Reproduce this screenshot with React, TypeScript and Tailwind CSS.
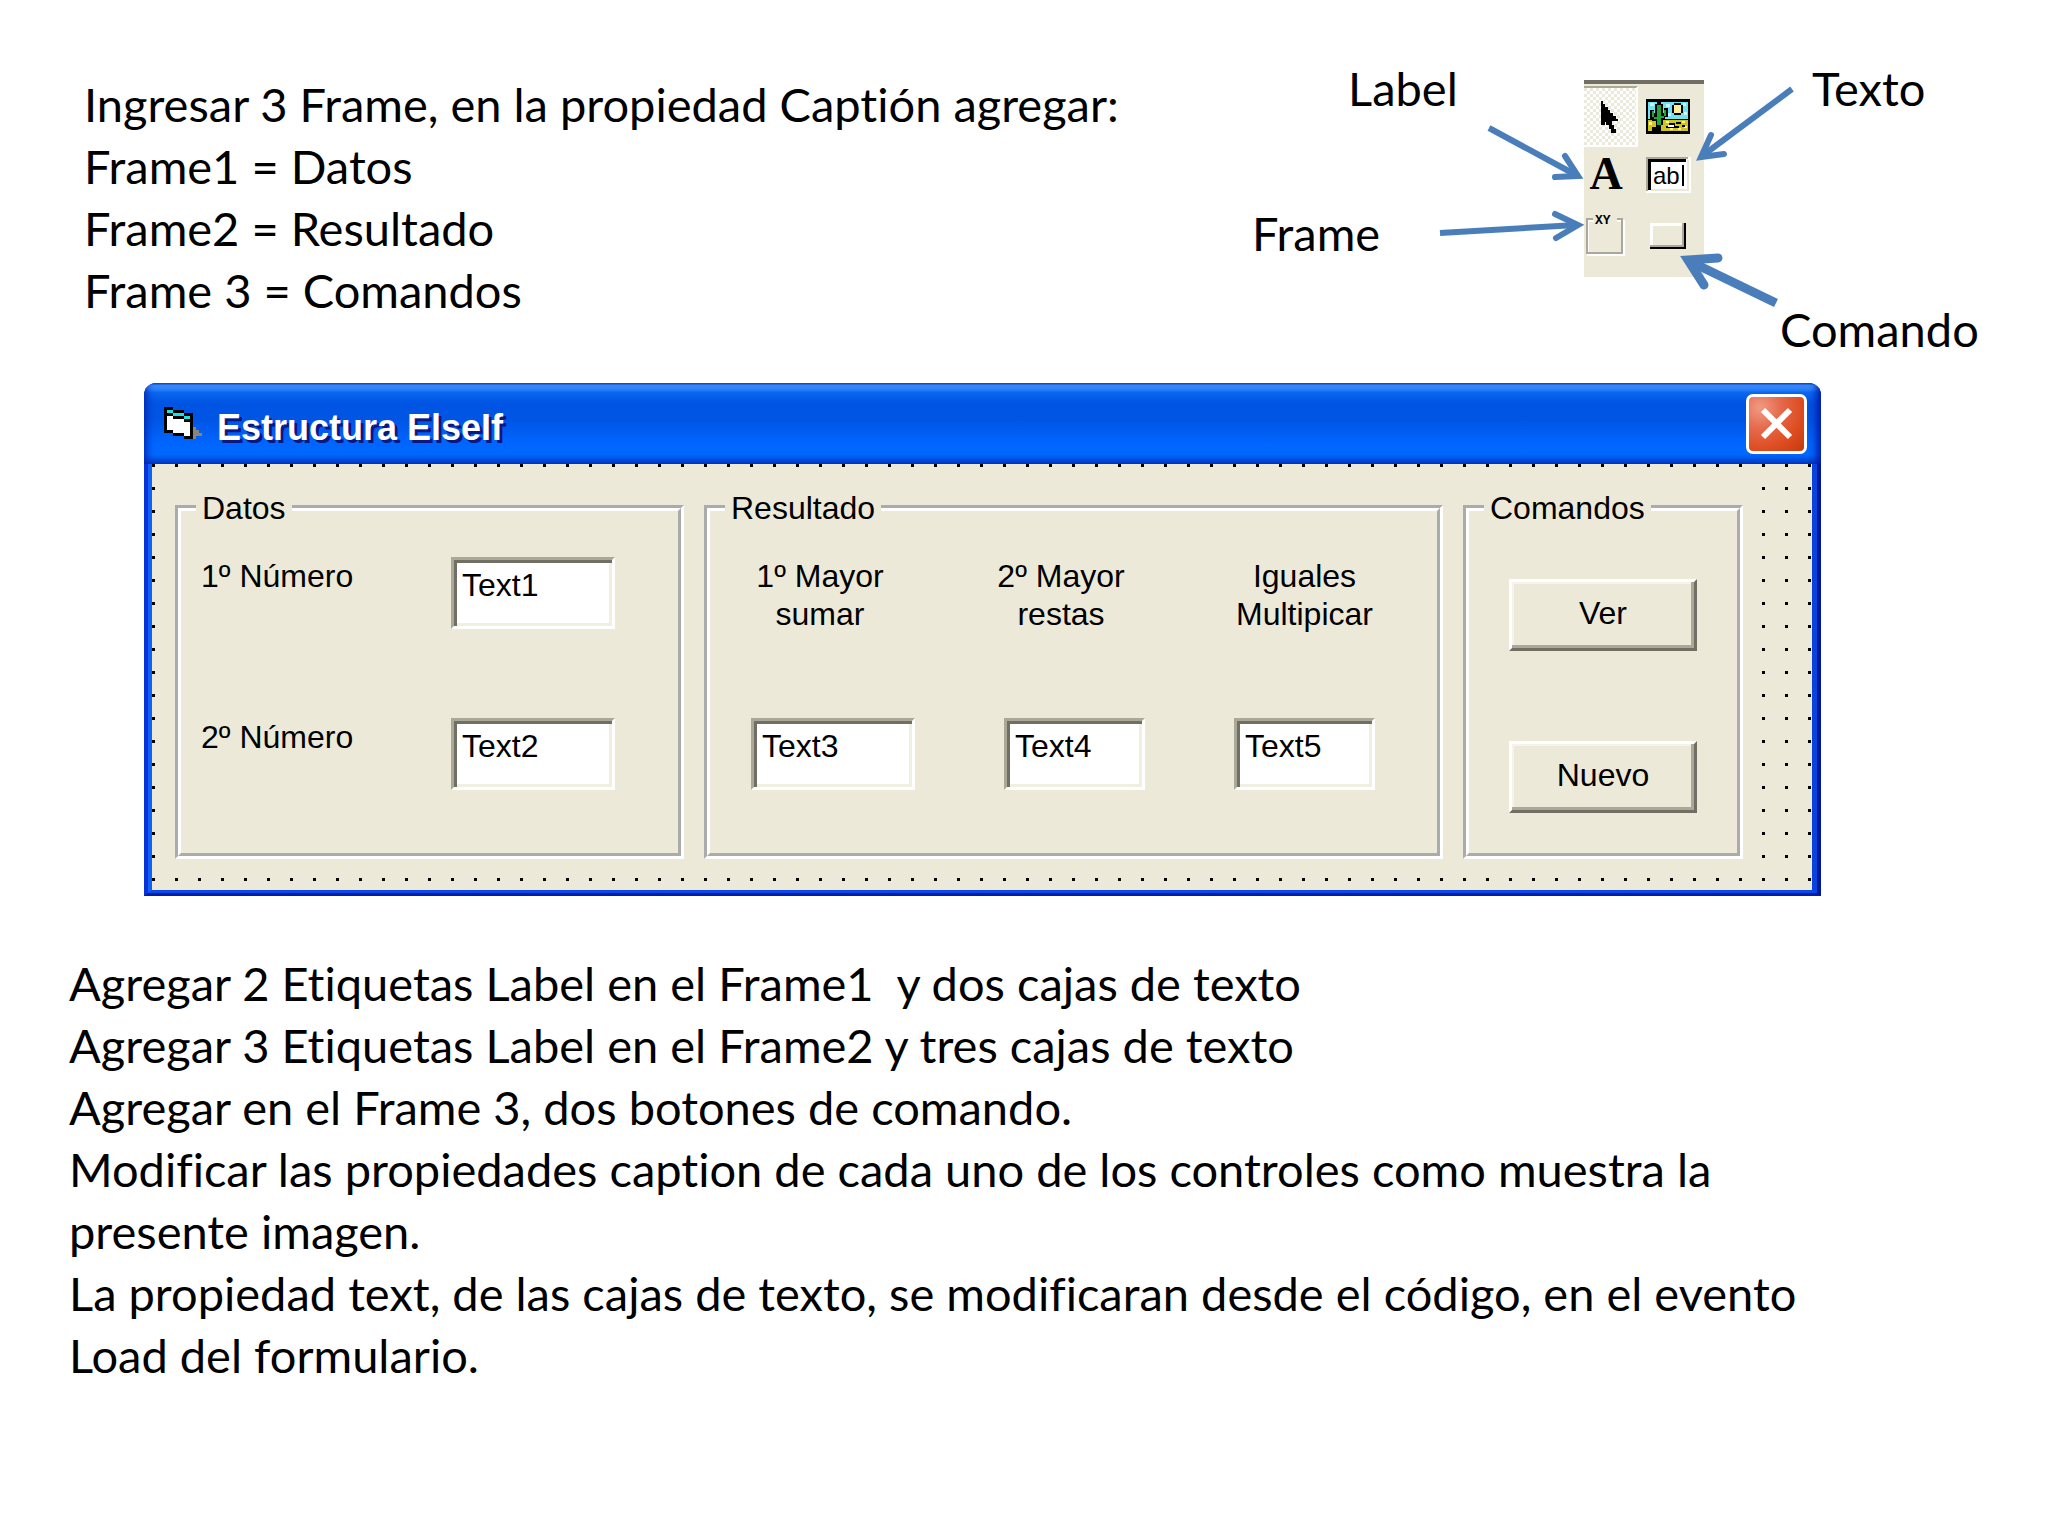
import type { ReactNode } from 'react';

const steps = [
  'Agregar 2 Etiquetas Label en el Frame1  y dos cajas de texto',
  'Agregar 3 Etiquetas Label en el Frame2 y tres cajas de texto',
  'Agregar en el Frame 3, dos botones de comando.',
  'Modificar las propiedades caption de cada uno de los controles como muestra la presente imagen.',
  'La propiedad text, de las cajas de texto, se modificaran desde el código, en el evento Load del formulario.',
];

function Frame({ caption, children }: { caption: string; children: ReactNode }) {
  return (
    <div className="bg-[#ece9d8]">
      <fieldset className="h-[373px] border-[6px] border-white [border-style:groove]">
        <legend className="ml-[15px] px-[6px] leading-[44px]">{caption}</legend>
        {children}
      </fieldset>
    </div>
  );
}

function TextBox({ id, value, className }: { id: string; value: string; className: string }) {
  return (
    <input
      id={id}
      type="text"
      defaultValue={value}
      className={`h-[72px] border-[3px] border-t-[#aca899] border-l-[#aca899] border-r-white border-b-white bg-white pb-4 pl-2 shadow-[inset_3px_3px_0_#716f64,inset_-3px_-3px_0_#f1efe2] outline-none ${className}`}
    />
  );
}

function CommandButton({ children }: { children: ReactNode }) {
  return (
    <button
      type="button"
      className="h-[72px] w-full border-[3px] border-t-white border-l-white border-r-[#716f64] border-b-[#716f64] bg-[#ece9d8] pb-1 shadow-[inset_-3px_-3px_0_#aca899,inset_2px_2px_0_#f6f4ea]"
    >
      {children}
    </button>
  );
}

function FormIcon() {
  return (
    <svg width="38" height="33" viewBox="0 0 38 33" shapeRendering="crispEdges" aria-hidden="true">
      <path d="M29 20h3v3h3v3h3v3h-6v3h-4z" fill="#8a8577" />
      <path d="M0 0h9v3h11v3h9v26h-9v-3H9v-3H0z" fill="#000" />
      <path d="M3 3h6v3h11v3h6v3h-6V9H9V6H3z" fill="#19e3e3" />
      <path d="M3 9h6v3h11v3h6v14h-6v-3H9v-3H3z" fill="#fff" />
    </svg>
  );
}

function Toolbox() {
  return (
    <div className="grid h-[197px] w-[120px] grid-cols-[54px_60px] grid-rows-[65px_52px_76px] border-t-4 border-[#716f64] bg-[#ece9d8]">
      <button
        type="button"
        aria-label="Puntero"
        className="my-[2px] flex items-center justify-center border-t-2 border-r-2 border-b-2 border-t-[#aca899] border-r-white border-b-white bg-[#f4f2e8] bg-[conic-gradient(#fff_25%,#ebe8dc_0_50%,#fff_0_75%,#ebe8dc_0)] bg-size-[6px_6px]"
      >
        <svg width="18" height="32" viewBox="0 0 18 32" shapeRendering="crispEdges">
          <path d="M0 0h2v3h2v3h3v3h2v3h3v3h3v3h2v2h-6v4h2v4h2v4h-5v-4H8v-4H5v-3H4v3H0z" />
        </svg>
      </button>
      <button type="button" aria-label="Imagen" className="flex items-center justify-center">
        <svg width="44" height="35" viewBox="0 0 44 35" shapeRendering="crispEdges">
          <rect width="44" height="35" fill="#000" />
          <rect x="2" y="3" width="40" height="17" fill="#6fe3f5" />
          <path d="M4 4h4v3H4zM20 5h4v3h-4zM37 4h3v3h-3zM21 14h4v3h-4zM38 13h3v3h-3z" fill="#c9f7fb" />
          <rect x="2" y="21" width="40" height="11" fill="#d0c41e" />
          <path d="M3 23h3v3H3zM20 22h3v2h-3zM36 22h3v2h-3zM32 29h3v2h-3zM38 27h3v2h-3zM24 29h3v2h-3z" fill="#fdf58a" />
          <path d="M28 4h7v2h2v8h-2v2h-7v-2h-2V6h2z" fill="#000" />
          <rect x="28" y="6" width="7" height="8" fill="#ffee9a" />
          <path d="M11 3h4v2h2v9h1V9h4v9h-3v3h-2v5h-2v6H6v-4h4v-6H6v-2H4v-9h4v3h1V5h2z" fill="#000" />
          <path d="M11 6h4v20h-4zM6 12h2v6H6zM8 18h3v2H8zM18 11h2v6h-2zM15 17h3v2h-3z" fill="#1fa53a" />
          <path d="M23 24h6v3h4v2H20v-2h3zM30 23h5v2h-5zM36 26h3v2h-3z" fill="#000" />
          <path d="M22 26h6v2h-6z" fill="#fff" />
        </svg>
      </button>
      <button type="button" aria-label="Label" className="flex items-center justify-center pr-[10px]">
        <svg width="44" height="56" viewBox="0 0 44 56" className="shrink-0">
          <text x="22" y="42" textAnchor="middle" className="font-['Liberation_Serif',serif] text-[46px] leading-none font-bold">
            A
          </text>
        </svg>
      </button>
      <button type="button" aria-label="TextBox" className="flex items-center justify-center">
        <svg width="45" height="36" viewBox="0 0 45 36">
          <path d="M0 0h45v36H0z" fill="#fff" />
          <path d="M0 0h42v2H2v32H0z" fill="#aca899" />
          <path d="M2 2h38v3H5v28H2z" fill="#000" />
          <path d="M42 3v30H5" fill="none" stroke="#ece9d8" strokeWidth="2" />
          <text x="7" y="27" className="font-['Liberation_Sans',sans-serif] text-[24px] leading-none">
            ab
          </text>
          <path d="M36 8h2v21h-2z" fill="#000" />
        </svg>
      </button>
      <button type="button" aria-label="Frame" className="flex items-start justify-center pt-3 pr-[10px]">
        <svg width="44" height="46" viewBox="0 0 44 46">
          <path d="M10 8H4v34h36V8h-7" fill="none" stroke="#fff" strokeWidth="2" />
          <path d="M9 6H3v34h35V6h-5" fill="none" stroke="#aca899" strokeWidth="2" />
          <text x="11" y="11" className="font-['Liberation_Mono',monospace] text-[13px] leading-none font-bold">
            XY
          </text>
        </svg>
      </button>
      <button type="button" aria-label="CommandButton" className="flex items-start justify-center pt-[22px]">
        <svg width="36" height="26" viewBox="0 0 36 26">
          <path d="M0 0h36v26H0z" fill="#000" />
          <path d="M0 0h34v24H0z" fill="#aca899" />
          <path d="M0 0h32v22H0z" fill="#fff" />
          <path d="M3 3h29v19H3z" fill="#ece9d8" />
        </svg>
      </button>
    </div>
  );
}

/* Toolbox with the name of each tool pointed out */
function ToolboxDiagram() {
  return (
    <div className="relative h-[383px] w-[824px] shrink-0">
      <div className="absolute top-20 left-[360px]">
        <Toolbox />
      </div>
      <span className="absolute top-[57px] left-[124px]">Label</span>
      <span className="absolute top-[202px] left-7">Frame</span>
      <span className="absolute top-[57px] left-[588px]">Texto</span>
      <span className="absolute top-[298px] left-[556px]">Comando</span>
      <svg
        className="pointer-events-none absolute inset-0"
        width="824"
        height="383"
        viewBox="0 0 824 383"
        fill="none"
        stroke="#4a7ebb"
        strokeWidth="6"
        aria-hidden="true"
      >
        <path d="M265 128L352 175" />
        <path d="M341 156L354 176L331 177" strokeLinecap="round" />
        <path d="M216 233L352 225" />
        <path d="M331 214L354 225L332 238" strokeLinecap="round" />
        <path d="M568 89L478 156" />
        <path d="M487 135L477 157L500 154" strokeLinecap="round" />
        <g strokeWidth="9">
          <path d="M552 303L465 261" />
          <path d="M494 258L464 260L480 285" strokeLinecap="round" />
        </g>
      </svg>
    </div>
  );
}

function FormWindow() {
  return (
    <section className="mr-[227px] ml-36 overflow-hidden rounded-t-[12px] bg-[#0831d9] font-['Liberation_Sans',sans-serif] text-[32px] leading-[38px]">
      <div className="flex h-[81px] items-center bg-[linear-gradient(#0a52d8_0,#3d95ff_3%,#2f86fb_7%,#0a66ee_12%,#0054e3_25%,#0055e5_45%,#0066ff_75%,#0068ff_88%,#0050e0_95%,#003dcb_100%)] pr-[14px] pl-5 shadow-[inset_6px_0_8px_-4px_#0020a8,inset_-8px_0_8px_-4px_#0014a0]">
        <FormIcon />
        <h1 className="ml-[15px] flex-1 pt-2 text-[36px] font-bold text-white [text-shadow:3px_3px_0_#0a1883]">
          Estructura ElseIf
        </h1>
        <button
          type="button"
          aria-label="Cerrar"
          className="flex h-[60px] w-[61px] items-center justify-center rounded-[7px] border-[3px] border-white bg-[radial-gradient(circle_at_20%_20%,#f09a84_0,#e5694a_35%,#dd4a1e_70%,#c43a10_100%)]"
        >
          <svg width="33" height="33" viewBox="0 0 33 33" stroke="#fff" strokeWidth="6">
            <path d="M3 3L30 30M30 3L3 30" />
          </svg>
        </button>
      </div>
      <div className="border-r-4 border-b-[3px] border-l-4 border-r-[#00189a] border-b-[#001ea8] border-l-[#0733d8]">
        <div className="border-r-[5px] border-b-[3px] border-l-4 border-r-[#0843de] border-b-[#0a48e8] border-l-[#1062f4]">
          <div className="grid grid-cols-[509fr_739fr_280fr] gap-5 bg-[#ece9d8] bg-[conic-gradient(from_90deg_at_20px_20px,#000_90deg,transparent_0)] bg-size-[23px_23px] bg-position-[-20px_-20px] pt-[22px] pr-[69px] pb-[31px] pl-[23px]">
            <Frame caption="Datos">
              <div className="flex flex-col gap-[89px] pt-[27px] pr-[63px] pl-5">
                <div className="flex items-start justify-between">
                  <label htmlFor="text1">1º Número</label>
                  <TextBox id="text1" value="Text1" className="w-[164px]" />
                </div>
                <div className="flex items-start justify-between">
                  <label htmlFor="text2">2º Número</label>
                  <TextBox id="text2" value="Text2" className="w-[164px]" />
                </div>
              </div>
            </Frame>
            <Frame caption="Resultado">
              <div className="grid grid-cols-[190fr_230fr_230fr] pt-[27px] pr-[62px] pl-[15px] text-center">
                <div className="flex flex-col items-end gap-[85px]">
                  <label htmlFor="text3" className="w-[190px]">
                    1º Mayor
                    <br />
                    sumar
                  </label>
                  <TextBox id="text3" value="Text3" className="w-[164px]" />
                </div>
                <div className="flex flex-col items-end gap-[85px]">
                  <label htmlFor="text4" className="w-[168px]">
                    2º Mayor
                    <br />
                    restas
                  </label>
                  <TextBox id="text4" value="Text4" className="w-[141px]" />
                </div>
                <div className="flex flex-col items-end gap-[85px]">
                  <label htmlFor="text5" className="w-[141px]">
                    Iguales
                    <br />
                    Multipicar
                  </label>
                  <TextBox id="text5" value="Text5" className="w-[141px]" />
                </div>
              </div>
            </Frame>
            <Frame caption="Comandos">
              <div className="flex flex-col gap-[90px] px-10 pt-[49px]">
                <CommandButton>Ver</CommandButton>
                <CommandButton>Nuevo</CommandButton>
              </div>
            </Frame>
          </div>
        </div>
      </div>
    </section>
  );
}

export default function App() {
  return (
    <main className="min-h-screen bg-white font-['Lato',sans-serif] text-[47px] leading-[62px] text-black [font-variant-ligatures:none]">
      <div className="flex justify-between">
        <div className="pt-[73px] pl-[84px] whitespace-nowrap">
          <p>Ingresar 3 Frame, en la propiedad Captión agregar:</p>
          <p>Frame1 = Datos</p>
          <p>Frame2 = Resultado</p>
          <p>Frame 3 = Comandos</p>
        </div>
        <ToolboxDiagram />
      </div>
      <FormWindow />
      <div className="pt-14 pr-[190px] pl-[69px] whitespace-pre-wrap">
        {steps.map((step) => (
          <p key={step}>{step}</p>
        ))}
      </div>
    </main>
  );
}
